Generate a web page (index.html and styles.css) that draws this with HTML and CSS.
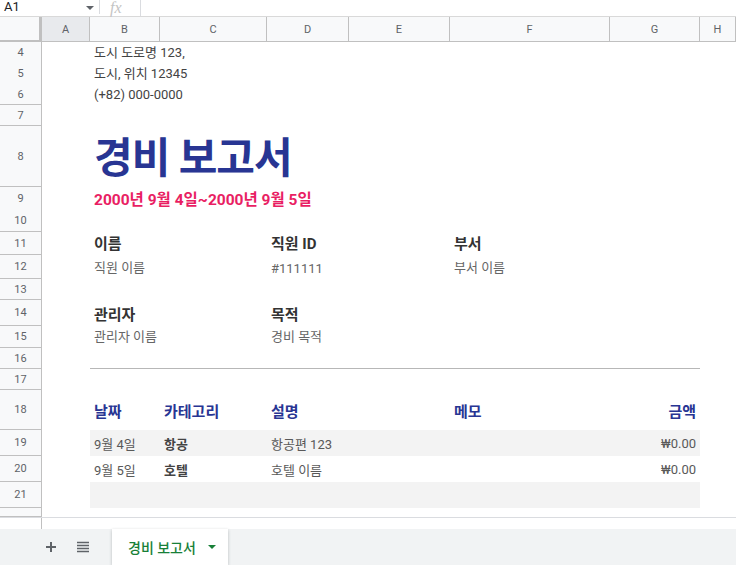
FILE: index.html
```html
<!DOCTYPE html>
<html lang="ko">
<head>
    <meta charset="UTF-8">
    <meta name="viewport" content="width=device-width, initial-scale=1.0">
    <title>경비 보고서</title>
    <link rel="stylesheet" href="styles.css">
</head>
<body>
    <!-- name box / formula bar (top is cut off) -->
    <div class="namebar">
        <div class="namebox">A1<span class="caret"></span></div>
        <div class="fx">fx</div>
    </div>

    <div class="sheet">
        <div class="row colhead">
            <div class="corner"></div>
            <div class="ch sel">A</div>
            <div class="ch">B</div>
            <div class="ch">C</div>
            <div class="ch">D</div>
            <div class="ch">E</div>
            <div class="ch">F</div>
            <div class="ch">G</div>
            <div class="ch">H</div>
        </div>

        <!-- address -->
        <div class="row h21"><div class="rh">4</div><div class="c wide addr">도시 도로명 123,</div></div>
        <div class="row h21"><div class="rh">5</div><div class="c wide addr">도시, 위치 12345</div></div>
        <div class="row h21"><div class="rh">6</div><div class="c wide addr">(+82) 000-0000</div></div>
        <div class="row h21"><div class="rh">7</div></div>

        <!-- title -->
        <div class="row h61"><div class="rh">8</div><div class="c wide title">경비 보고서</div></div>
        <div class="row h23"><div class="rh">9</div><div class="c wide dates">2000년 9월 4일~2000년 9월 5일</div></div>
        <div class="row h22"><div class="rh">10</div></div>

        <!-- info -->
        <div class="row h23">
            <div class="rh">11</div>
            <div class="c col-b label">이름</div>
            <div class="c col-d label">직원 ID</div>
            <div class="c col-f label">부서</div>
        </div>
        <div class="row h24">
            <div class="rh">12</div>
            <div class="c col-b value">직원 이름</div>
            <div class="c col-d value">#111111</div>
            <div class="c col-f value">부서 이름</div>
        </div>
        <div class="row h21"><div class="rh">13</div></div>
        <div class="row h26">
            <div class="rh">14</div>
            <div class="c col-b label">관리자</div>
            <div class="c col-d label">목적</div>
        </div>
        <div class="row h22">
            <div class="rh">15</div>
            <div class="c col-b value">관리자 이름</div>
            <div class="c col-d value">경비 목적</div>
        </div>
        <div class="row h21"><div class="rh">16</div><div class="rule"></div></div>
        <div class="row h21"><div class="rh">17</div></div>

        <!-- expenses -->
        <div class="row h40">
            <div class="rh">18</div>
            <div class="band">
                <div class="t th">날짜</div>
                <div class="t th">카테고리</div>
                <div class="t th">설명</div>
                <div class="t"></div>
                <div class="t th">메모</div>
                <div class="t th num">금액</div>
            </div>
        </div>
        <div class="row h26">
            <div class="rh">19</div>
            <div class="band shade">
                <div class="t">9월 4일</div>
                <div class="t strong">항공</div>
                <div class="t">항공편 123</div>
                <div class="t"></div>
                <div class="t"></div>
                <div class="t num">₩0.00</div>
            </div>
        </div>
        <div class="row h26">
            <div class="rh">20</div>
            <div class="band">
                <div class="t">9월 5일</div>
                <div class="t strong">호텔</div>
                <div class="t">호텔 이름</div>
                <div class="t"></div>
                <div class="t"></div>
                <div class="t num">₩0.00</div>
            </div>
        </div>
        <div class="row h26">
            <div class="rh">21</div>
            <div class="band shade"></div>
        </div>
        <div class="row h9"><div class="rh"></div></div>
    </div>

    <div class="hscroll"><div class="hs-left"></div></div>

    <!-- sheet tabs -->
    <div class="tabs">
        <div class="tab-tools">
            <svg class="tool" width="12" height="12" viewBox="0 0 12 12">
                <path d="M6 1v10M1 6h10" stroke="#5f6368" stroke-width="2" fill="none"/>
            </svg>
            <svg class="tool" width="14" height="12" viewBox="0 0 14 12">
                <path d="M1 1.5h12M1 4.5h12M1 7.5h12M1 10.5h12" stroke="#5f6368" stroke-width="1.6" fill="none"/>
            </svg>
        </div>
        <div class="tab">경비 보고서<span class="tab-caret"></span></div>
    </div>
</body>
</html>
```

FILE: styles.css
```css
* { box-sizing: border-box; }
body { margin: 0; font-family: Roboto, "Noto Sans CJK KR", sans-serif; background: white; overflow: hidden; }

/* top bar */
.namebar { height: 17px; display: flex; border-bottom: 1px solid #d9d9d9; }
.namebox { width: 100px; height: 14px; padding-left: 4px; font-size: 13px; line-height: 14px; color: #202124; border-right: 1px solid #dadce0; position: relative; }
.caret { position: absolute; left: 86px; top: 6px; border-left: 4px solid transparent; border-right: 4px solid transparent; border-top: 4px solid #5f6368; }
.fx { width: 41px; height: 16px; padding: 0 0 0 10px; font-family: "Liberation Serif", serif; font-style: italic; font-size: 16px; line-height: 16px; color: #c4c4c4; border-right: 1px solid #dadce0; }

/* grid */
.sheet { width: 736px; }
.row { display: grid; grid-template-columns: 42px 48px 70px 107px 82px 101px 160px 90px 1fr; }
.h9 { height: 9px; }
.h21 { height: 21px; }
.h22 { height: 22px; }
.h23 { height: 23px; }
.h24 { height: 24px; }
.h26 { height: 26px; }
.h40 { height: 40px; }
.h61 { height: 61px; }

.colhead { height: 25px; background: #f8f9fa; }
.corner { border-right: 3px solid #c0c0c0; border-bottom: 2px solid #c0c0c0; background: #f8f9fa; }
.ch { display: flex; align-items: center; justify-content: center; font-size: 11px; color: #5f6368; border-right: 1px solid #c0c0c0; border-bottom: 1px solid #c0c0c0; }
.ch.sel { background: #e8eaed; }

.rh { grid-column: 1; display: flex; align-items: center; justify-content: center; font-size: 11px; color: #5f6368; background: #f8f9fa; border-right: 1px solid #c0c0c0; border-bottom: 1px solid #c0c0c0; }

.c { display: flex; align-items: flex-end; padding: 0 4px 3px; white-space: nowrap; }
.wide { grid-column: 3 / 9; }
.col-b { grid-column: 3 / 5; }
.col-d { grid-column: 5 / 7; }
.col-f { grid-column: 7 / 9; }

.addr { font-size: 13px; color: #434343; }
.title { font-size: 42px; font-weight: 700; letter-spacing: -1px; color: #283593; padding-bottom: 3px; line-height: 1.2; }
.dates { font-size: 15.5px; font-weight: 700; color: #e91e63; padding-bottom: 2px; }
.label { font-size: 15px; font-weight: 700; color: #333; padding-bottom: 2px; }
.value { font-size: 13px; color: #666; }

.rule { grid-column: 3 / 9; border-bottom: 1px solid #b7b7b7; }

/* expense table */
.band { grid-column: 3 / 9; display: grid; grid-template-columns: 70px 107px 82px 101px 160px 90px; }
.shade { background: #f3f3f3; }
.t { display: flex; align-items: center; padding: 0 4px; font-size: 13px; color: #595959; white-space: nowrap; }
.th { font-size: 15px; font-weight: 700; color: #283593; padding-top: 1px; }
.strong { font-weight: 700; color: #434343; }
.num { justify-content: flex-end; }

.hscroll { height: 12px; border-top: 1px solid #dadce0; }
.hs-left { width: 42px; height: 100%; border-right: 1px solid #c0c0c0; }

/* tabs */
.tabs { height: 36px; background: #f1f3f4; display: flex; }
.tab-tools { width: 112px; display: flex; align-items: center; gap: 19px; padding-left: 45px; padding-bottom: 1px; }
.tab { width: 116px; background: white; display: flex; align-items: center; padding-left: 16px; font-size: 14px; font-weight: 500; color: #188038; box-shadow: 0 1px 3px rgba(60,64,67,0.3); }
.tab-caret { margin-left: 12px; border-left: 4px solid transparent; border-right: 4px solid transparent; border-top: 4px solid #188038; }
```
